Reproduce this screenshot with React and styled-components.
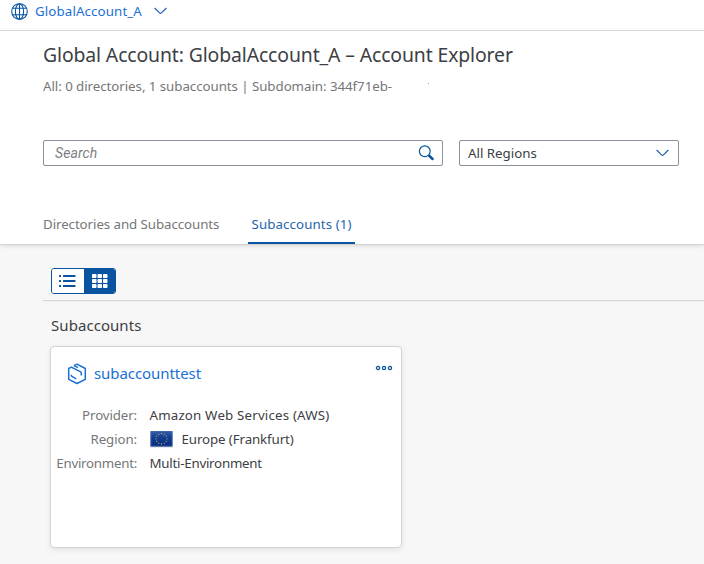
import React from 'react';
import styled, { createGlobalStyle } from 'styled-components';

const GlobalStyle = createGlobalStyle`
  * { box-sizing: border-box; }
  body {
    margin: 0;
    background: #f7f7f7;
    color: #3c4044;
    font: 13.3px/20px "Noto Sans", sans-serif;
    overflow: hidden;
  }
`;

const Page = styled.div`
  height: 564px;
  overflow: hidden;
`;

const TopBar = styled.nav`
  display: flex;
  align-items: center;
  height: 31px;
  padding: 0 0 8px 11px;
  background: #fff;
  border-bottom: 1px solid #dfdfdf;
  color: #1a70d4;
  letter-spacing: 0.12px;

  svg:first-child { margin-right: 7px; }
  svg:last-child { margin-left: 12px; }
`;

const Header = styled.header`
  display: flex;
  flex-direction: column;
  height: 214px;
  padding: 12px 0 0 43px;
  background: #fff;
  border-bottom: 1px solid #d5d5d5;
  box-shadow: 0 1px 4px rgba(0, 0, 0, 0.13);
`;

const Title = styled.h1`
  margin: 0;
  font-size: 19.4px;
  line-height: 24px;
  font-weight: 400;
  letter-spacing: -0.12px;
`;

const Summary = styled.div`
  display: flex;
  margin-top: 9px;
  color: #74777a;
  letter-spacing: -0.05px;
`;

const Speck = styled.span`
  width: 1px;
  height: 1px;
  margin: 7px 0 0 36px;
  background: #a0a2a4;
`;

const Filters = styled.div`
  display: flex;
  gap: 16px;
  margin-top: 44px;
`;

const Field = styled.div`
  display: flex;
  align-items: center;
  justify-content: space-between;
  width: ${(p) => p.$width}px;
  height: 26px;
  padding: 0 ${(p) => p.$end}px 0 ${(p) => p.$inset}px;
  border: 1px solid #89919a;
  border-radius: 2px;
  background: #fff;
`;

const Placeholder = styled.span`
  font: italic 14px/20px Roboto, sans-serif;
  letter-spacing: 0.1px;
  color: #7c7f82;
`;

const Tabs = styled.div`
  display: flex;
  gap: 25px;
  margin-top: 48px;
`;

const Tab = styled.div`
  height: 30px;
  padding-left: ${(p) => (p.$active ? 3.5 : 0)}px;
  width: ${(p) => p.$width}px;
  white-space: nowrap;
  letter-spacing: ${(p) => (p.$active ? 0.1 : -0.07)}px;
  color: ${(p) => (p.$active ? '#2565ae' : '#74777a')};
  border-bottom: ${(p) => (p.$active ? '2px solid #0854a0' : '0')};
  border-radius: 1px 1px 0 0;
`;

const Content = styled.main`
  padding: 23px 0 0 43px;
`;

const Toolbar = styled.div`
  height: 33px;
  padding-left: 8px;
  border-bottom: 1px solid #d5d5d5;
  box-shadow: 0 1px 2px rgba(0, 0, 0, 0.04);
`;

const Segmented = styled.div`
  display: flex;
  width: 65px;
  height: 26px;
  border: 1px solid #0854a0;
  border-radius: 3px;
  background: #fff;
  overflow: hidden;
`;

const Segment = styled.div`
  display: flex;
  align-items: center;
  justify-content: center;
  width: ${(p) => (p.$active ? 31 : 32)}px;
  color: ${(p) => (p.$active ? '#fff' : '#0854a0')};
  background: ${(p) => (p.$active ? '#0854a0' : '#fff')};
`;

const SectionTitle = styled.h2`
  margin: 14px 0 11px 8px;
  font-size: 15px;
  line-height: 20px;
  font-weight: 400;
  letter-spacing: 0.06px;
`;

const Card = styled.article`
  width: 352px;
  height: 202px;
  margin-left: 7px;
  border: 1px solid #d3d3d3;
  border-radius: 4px;
  background: #fff;
  box-shadow: 0 2px 6px rgba(0, 0, 0, 0.08);
`;

const CardHead = styled.div`
  display: flex;
  align-items: flex-start;
  height: 56px;
  padding: 16px 8px 0 16px;
`;

const CardName = styled.span`
  flex: 1;
  margin: 0 0 0 7px;
  font-size: 15px;
  line-height: 20px;
  letter-spacing: -0.07px;
  color: #1a70d4;
`;

const Details = styled.dl`
  display: grid;
  grid-template-columns: 86px 1fr;
  grid-auto-rows: 24px;
  column-gap: 12.5px;
  margin: 0;
  line-height: 24px;
`;

const Term = styled.dt`
  display: flex;
  justify-content: flex-end;
  white-space: nowrap;
  letter-spacing: ${(p) => p.$tracking || 0}px;
  color: #74777a;
`;

const Value = styled.dd`
  display: flex;
  align-items: center;
  gap: 9px;
  margin: 0;
  letter-spacing: ${(p) => p.$tracking || 0}px;
`;

const Globe = () => (
  <svg width="17" height="17" viewBox="0 0 17 17" fill="none" stroke="#0854a0" strokeWidth="1.1">
    <circle cx="8.5" cy="8.5" r="7.8" />
    <ellipse cx="8.5" cy="8.5" rx="4.1" ry="7.8" />
    <path d="M8.5 .7v15.6M1.5 5.3h14M1.5 11.7h14" />
  </svg>
);

const Chevron = () => (
  <svg width="13" height="8" viewBox="0 0 13 8" fill="none" stroke="#1f61ae" strokeWidth="1.2">
    <path d="M.6 1l5.2 5.1q.7.6 1.4 0L12.4 1" />
  </svg>
);

const SearchIcon = () => (
  <svg width="16" height="16" viewBox="0 0 16 16" fill="none" stroke="#0854a0">
    <circle cx="6.8" cy="6.3" r="5.4" strokeWidth="1.2" />
    <path d="M10.6 10.2l1.2 1.1" strokeWidth="1.3" />
    <path d="M11.4 11l3.2 3" strokeWidth="2.4" strokeLinecap="round" />
  </svg>
);

const ListIcon = () => (
  <svg width="18" height="14" viewBox="0 0 18 14" fill="currentColor">
    {[1, 6, 11].map((y) => (
      <React.Fragment key={y}>
        <rect x="0" y={y} width="2" height="2" rx=".5" />
        <rect x="4" y={y} width="12.5" height="2" rx=".5" />
      </React.Fragment>
    ))}
  </svg>
);

const GridIcon = () => (
  <svg width="16" height="14" viewBox="0 0 16 14" fill="currentColor">
    {[0, 5, 10].map((y) =>
      [0, 5.5, 11].map((x) => <rect key={`${x}-${y}`} x={x} y={y} width="4.5" height="4" rx=".8" />)
    )}
  </svg>
);

const SubaccountIcon = () => (
  <svg width="20" height="22" viewBox="0 0 20 22" fill="none" stroke="#1a70d4" strokeWidth="1.5">
    <path d="M6.9 2.6L10 1.1l8.3 4.4v10.8L10 20.5l-8.3-4.2V5.5l2.6-1.4 9 4.5q1 .5 1 1.6v2.3" strokeLinejoin="round" />
    <path d="M6.9 2.6l4.2 2.1" />
    <path d="M4.3 11.8v.4q0 1 1 1.5l4 2.1" />
  </svg>
);

const MoreIcon = () => (
  <svg width="18" height="10" viewBox="0 0 18 10" fill="none" stroke="#0854a0" strokeWidth="1.3">
    {[3, 9, 15].map((x) => <circle key={x} cx={x} cy="5" r="1.6" />)}
  </svg>
);

const EuFlag = () => (
  <svg width="23" height="18" viewBox="0 0 23 18">
    <defs>
      <linearGradient id="eu" x1="0" y1="0" x2="0" y2="1">
        <stop offset="0" stopColor="#385fae" />
        <stop offset=".4" stopColor="#123f94" />
        <stop offset="1" stopColor="#082c80" />
      </linearGradient>
    </defs>
    <rect x=".5" y="2" width="22" height="15.5" fill="#d0d4da" />
    <rect x=".5" y="1" width="22" height="15.5" fill="url(#eu)" />
    <path d="M1 16V1.5h21V16z" fill="none" stroke="#4a70b5" strokeWidth=".5" />
    {Array.from({ length: 12 }, (_, i) => {
      const a = (i * Math.PI) / 6;
      return (
        <circle key={i} cx={11.5 + 5.5 * Math.sin(a)} cy={8.8 - 5.2 * Math.cos(a)} r=".65" fill="#b9ae4c" />
      );
    })}
  </svg>
);

export default function App() {
  return (
    <Page>
      <GlobalStyle />
      <TopBar>
        <Globe />
        <span>GlobalAccount_A</span>
        <Chevron />
      </TopBar>
      <Header>
        <Title>Global Account: GlobalAccount_A – Account Explorer</Title>
        <Summary>
          <span>All: 0 directories, 1 subaccounts | Subdomain: 344f71eb-</span>
          <Speck />
        </Summary>
        <Filters>
          <Field $width={400} $inset={11} $end={8}>
            <Placeholder>Search</Placeholder>
            <SearchIcon />
          </Field>
          <Field $width={220} $inset={8} $end={9}>
            <span>All Regions</span>
            <Chevron />
          </Field>
        </Filters>
        <Tabs>
          <Tab $width={180}>Directories and Subaccounts</Tab>
          <Tab $width={107} $active>Subaccounts (1)</Tab>
        </Tabs>
      </Header>
      <Content>
        <Toolbar>
          <Segmented>
            <Segment><ListIcon /></Segment>
            <Segment $active><GridIcon /></Segment>
          </Segmented>
        </Toolbar>
        <SectionTitle>Subaccounts</SectionTitle>
        <Card>
          <CardHead>
            <SubaccountIcon />
            <CardName>subaccounttest</CardName>
            <MoreIcon />
          </CardHead>
          <Details>
            <Term $tracking={-0.12}>Provider:</Term>
            <Value $tracking={0.18}>Amazon Web Services (AWS)</Value>
            <Term $tracking={-0.1}>Region:</Term>
            <Value $tracking={-0.1}><EuFlag />Europe (Frankfurt)</Value>
            <Term $tracking={-0.26}>Environment:</Term>
            <Value $tracking={-0.24}>Multi-Environment</Value>
          </Details>
        </Card>
      </Content>
    </Page>
  );
}
